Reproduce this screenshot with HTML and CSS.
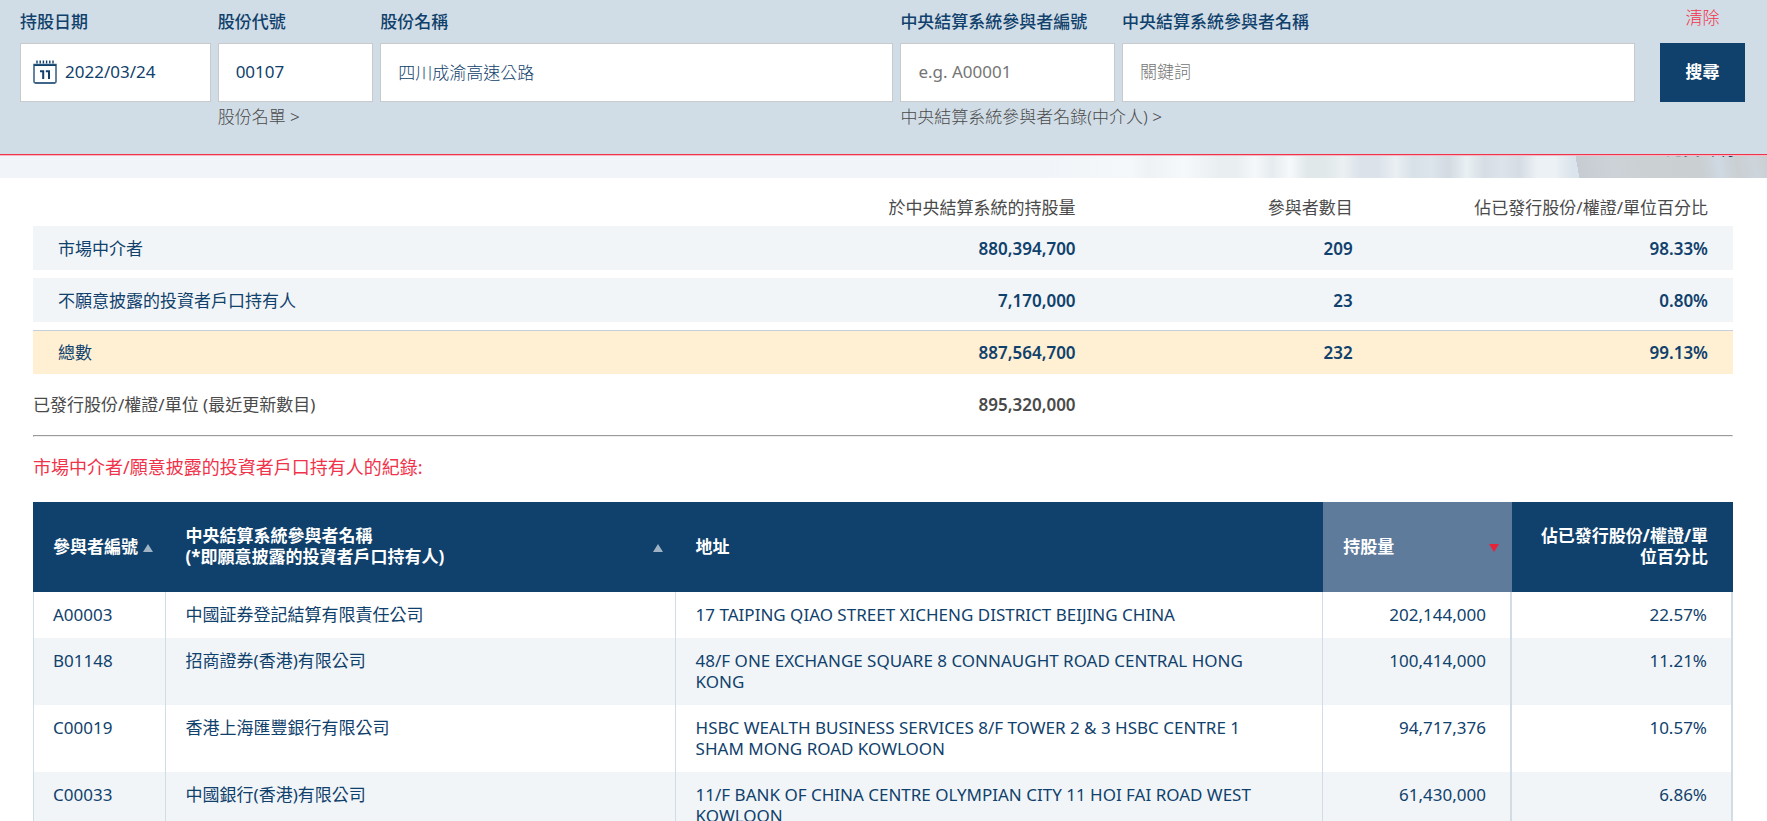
FILE: index.html
```html
<!DOCTYPE html>
<html lang="zh-Hant">
<head>
<meta charset="utf-8">
<title>中央結算系統持股紀錄查詢服務</title>
<meta name="viewport" content="width=device-width, initial-scale=1">
<link rel="stylesheet" href="styles.css">
</head>
<body>
<form class="search">
  <div class="field field-date">
    <label for="date">持股日期</label>
    <div class="box">
      <svg class="calendar" viewBox="0 0 24 24" width="24" height="24" aria-hidden="true">
        <path d="M4 0.500v3M7.200 0.500v3M10.400 0.500v3M13.600 0.500v3M16.800 0.500v3M20 0.500v3" stroke="#10416c" stroke-width="1.400" fill="none"/>
        <path d="M1 4.500h22v17a1.500 1.500 0 0 1-1.500 1.500h-19A1.500 1.500 0 0 1 1 21.500z" fill="#fff" stroke="#3f6689" stroke-width="1.600"/>
        <path d="M1 4.500h22v1.600H1zM2 22.400h20v1.200H2z" fill="#10416c"/>
        <path d="M7 11.200h3.200V19M12.800 11.200H16V19" stroke="#10416c" stroke-width="2" fill="none"/>
      </svg>
      <input id="date" type="text" value="2022/03/24">
    </div>
  </div>
  <div class="field field-code">
    <label for="code">股份代號</label>
    <input class="box" id="code" type="text" value="00107">
    <a class="list-link" href="#">股份名單 &gt;</a>
  </div>
  <div class="field field-name">
    <label for="name">股份名稱</label>
    <input class="box" id="name" type="text" value="四川成渝高速公路">
  </div>
  <div class="field field-pid">
    <label for="pid">中央結算系統參與者編號</label>
    <input class="box" id="pid" type="text" placeholder="e.g. A00001">
    <a class="list-link" href="#">中央結算系統參與者名錄(中介人) &gt;</a>
  </div>
  <div class="field field-pname">
    <label for="pname">中央結算系統參與者名稱</label>
    <input class="box" id="pname" type="text" placeholder="關鍵詞">
  </div>
  <div class="actions">
    <button class="clear" type="reset">清除</button>
    <button class="submit" type="submit">搜尋</button>
  </div>
</form>

<div class="banner"><a href="#">免責聲明</a></div>

<main>
  <table class="summary">
    <colgroup><col class="s-label"><col class="s-holding"><col class="s-count"><col class="s-percent"></colgroup>
    <thead>
      <tr><th colspan="2">於中央結算系統的持股量</th><th>參與者數目</th><th>佔已發行股份/權證/單位百分比</th></tr>
    </thead>
    <tbody>
      <tr class="row"><th scope="row">市場中介者</th><td>880,394,700</td><td>209</td><td>98.33%</td></tr>
      <tr class="row"><th scope="row">不願意披露的投資者戶口持有人</th><td>7,170,000</td><td>23</td><td>0.80%</td></tr>
      <tr class="row total"><th scope="row">總數</th><td>887,564,700</td><td>232</td><td>99.13%</td></tr>
      <tr class="issued"><th scope="row">已發行股份/權證/單位 (最近更新數目)</th><td>895,320,000</td><td></td><td></td></tr>
    </tbody>
  </table>
  <hr>
  <h2>市場中介者/願意披露的投資者戶口持有人的紀錄:</h2>
  <table class="records">
    <colgroup><col class="r-id"><col class="r-name"><col class="r-address"><col class="r-shares"><col class="r-percent"></colgroup>
    <thead>
      <tr>
        <th><div class="head">參與者編號<span class="up"></span></div></th>
        <th><div class="head"><span>中央結算系統參與者名稱<br>(*即願意披露的投資者戶口持有人)</span><span class="up"></span></div></th>
        <th>地址</th>
        <th class="sorted"><div class="head">持股量<span class="down"></span></div></th>
        <th class="num">佔已發行股份/權證/單位百分比</th>
      </tr>
    </thead>
    <tbody>
      <tr><td>A00003</td><td>中國証券登記結算有限責任公司</td><td>17 TAIPING QIAO STREET XICHENG DISTRICT BEIJING CHINA</td><td class="num">202,144,000</td><td class="num">22.57%</td></tr>
      <tr><td>B01148</td><td>招商證券(香港)有限公司</td><td>48/F ONE EXCHANGE SQUARE 8 CONNAUGHT ROAD CENTRAL HONG KONG</td><td class="num">100,414,000</td><td class="num">11.21%</td></tr>
      <tr><td>C00019</td><td>香港上海匯豐銀行有限公司</td><td>HSBC WEALTH BUSINESS SERVICES 8/F TOWER 2 &amp; 3 HSBC CENTRE 1 SHAM MONG ROAD KOWLOON</td><td class="num">94,717,376</td><td class="num">10.57%</td></tr>
      <tr><td>C00033</td><td>中國銀行(香港)有限公司</td><td>11/F BANK OF CHINA CENTRE OLYMPIAN CITY 11 HOI FAI ROAD WEST KOWLOON</td><td class="num">61,430,000</td><td class="num">6.86%</td></tr>
    </tbody>
  </table>
</main>
</body>
</html>
```
FILE: styles.css
```css
* { box-sizing: border-box; }

html { overflow: hidden auto; scrollbar-width: none; }

body {
  margin: 0;
  background: #fff;
  color: #10416c;
  font: 17px/21px "Noto Sans", "Noto Sans CJK TC", sans-serif;
}

input, button { font: inherit; color: inherit; }
a { color: inherit; text-decoration: none; }

.search {
  position: relative;
  z-index: 1;
  display: flex;
  gap: 7px;
  padding: 11px 22px 26px 20px;
  background: #d1dde6;
  border-bottom: 1px solid #f0334a;
  box-shadow: 0 1px #f6b9c3;
}

.field { display: flex; flex-direction: column; min-width: 0; }
.field label { margin-bottom: 11px; font-weight: 500; white-space: nowrap; }
.field-date { flex: 191 1 0; }
.field-code { flex: 156 1 0; }
.field-name { flex: 514 1 0; }
.field-pid { flex: 215 1 0; }
.field-pname { flex: 514 1 0; }

.box {
  width: 100%;
  height: 59px;
  padding: 0 17px 2px;
  background: #fff;
  border: 1px solid #c8cacc;
  border-radius: 0;
}
div.box { display: flex; align-items: center; gap: 8px; padding: 0 12px 2px; }
div.box input { width: 100%; min-width: 0; padding: 0; border: 0; background: none; }
.calendar { flex: none; }
#name, #pname { font-weight: 300; }
input::placeholder { color: #757575; opacity: 1; }

.list-link {
  margin-top: 4px;
  padding-bottom: 1px;
  color: #4a4a4a;
  font-weight: 300;
  white-space: nowrap;
}

.actions {
  flex: none;
  display: flex;
  flex-direction: column;
  width: 85px;
  margin-left: 18px;
}
.actions button { border: 0; padding: 0; cursor: pointer; }
.actions .clear { height: 21px; margin: -4px 0 15px; background: none; color: #f0334a; font-weight: 300; }
.actions .submit { height: 59px; padding-bottom: 2px; background: #10416c; color: #fff; font-weight: 700; }

.banner {
  margin-top: -20px;
  height: 43px;
  padding-right: 33px;
  text-align: right;
  line-height: 28px;
  background:
    linear-gradient(80deg, transparent 89%, #c6ccd1 89%, #ccd2d7 91%, #cbd0d3 93%, #cacfd2 96%, #cfd9e2 97%, #cacfd2 98%, #cdd5dc 99%, #cacdcf 100%),
    linear-gradient(90deg,
      #f1f5f9 59%, #f5f8fa 64%, #eef2f4 65%, #f6f9fb 67%, #e9eef1 69%, #e9eef1 70%,
      #f5f8fa 71%, #e5ebef 72%, #f6f9fb 73%, #e0e8ea 74%, #e0e8ea 75%,
      #ebf0f2 76%, #dbe2ea 77%, #dbe2ea 78%, #e9eff2 79%, #d8e0e8 80%, #dce4ec 81%, #d3dae1 82%,
      #e9f0f3 83%, #d6dde4 84%, #dce3ea 85%, #d5dce4 86%, #ebf1f4 87%, #ebf1f4 88%, #dbe4ec 89%);
}

main { padding: 11px 34px 0 33px; }

table { width: 100%; table-layout: fixed; text-align: left; }
th, td { padding: 0; }
th { font-weight: 400; }

.summary { border-spacing: 0 8px; }
.s-label { width: 40%; }
.s-holding { width: 22.8%; }
.s-count { width: 16.3%; }
.s-percent { width: 20.9%; }
.summary thead th { padding-right: 25px; color: #4a4a4a; text-align: right; }
.summary td { height: 44px; padding-right: 25px; text-align: right; font-weight: 600; }
.summary .row { background: #f1f5f8; }
.summary .row th { padding-left: 25px; }
.summary .total { background: #fff0d4; }
.summary .total th, .summary .total td { border-top: 1px solid #c5d0da; }
.summary .issued { color: #4a4a4a; }

hr {
  margin: 1px 0 20px;
  border: 1px solid #9a9a9a;
  border-right-color: #eee;
  border-bottom-color: #eee;
}

h2 { margin: 0 0 24px; color: #f0334a; font-size: 18px; font-weight: 400; line-height: 21px; }

.records { border-spacing: 0; }
.r-id { width: 7.8%; }
.r-name { width: 30%; }
.r-address { width: 38.1%; }
.r-shares { width: 11.1%; }
.r-percent { width: 13%; }

.records th {
  height: 90px;
  padding: 0 13px 2px 20px;
  background: #10416c;
  color: #fff;
  font-weight: 700;
}
.records .sorted { background: #5f7b9c; }
.records .num { padding-right: 25px; text-align: right; }
.head { display: flex; align-items: center; justify-content: space-between; white-space: nowrap; }
.up, .down { margin-top: 4px; border: 5px solid transparent; border-top-width: 0; border-bottom: 8px solid #9fb3c4; }
.down { border-width: 8px 5px 0; border-color: #e5243b transparent transparent; }

.records td {
  padding: 12px 20px 13px;
  border-right: 1px solid #d1dde6;
  vertical-align: top;
}
.records td:first-child { padding-left: 19px; border-left: 1px solid #d1dde6; }
.records td:nth-child(3) { padding-right: 45px; }
.records td:nth-child(n + 4) { padding-right: 24px; border-right-width: 2px; }
.records tbody tr:nth-child(even) { background: #f1f5f8; }
```
